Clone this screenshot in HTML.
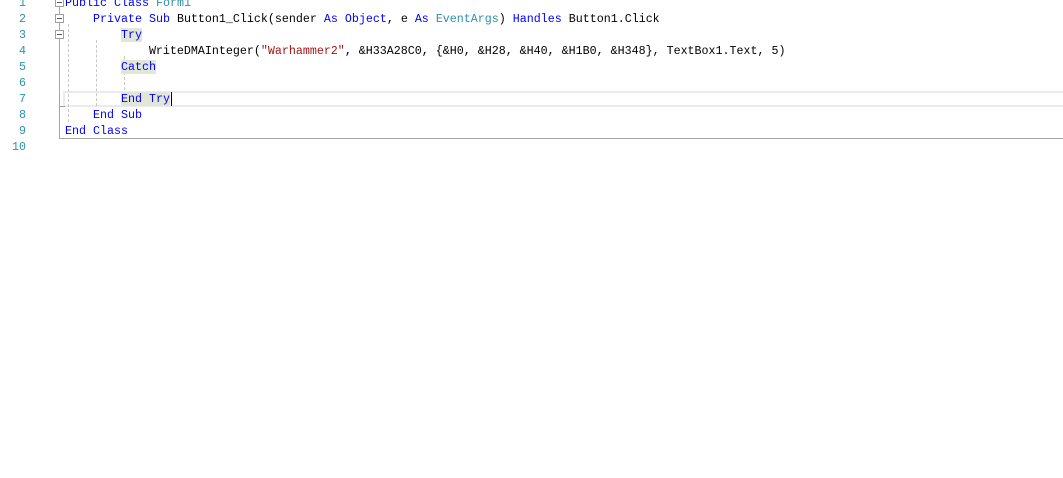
<!DOCTYPE html><html><head><style>
body{margin:0;width:1063px;height:478px;background:#fff;overflow:hidden;position:relative;font-family:"Liberation Mono",monospace;font-size:11.67px}
.l{position:absolute;left:65px;white-space:pre;height:16px;line-height:16px;color:#000;margin-top:1px}
.n{position:absolute;left:0;width:26px;text-align:right;color:#2b91af;height:16px;line-height:16px;margin-top:1px}
.k{color:#0000ff}.t{color:#2b91af}.s{color:#a31515}.h{background:#e2e6d6}
.box{position:absolute;width:7px;height:7px;border:1px solid #a0a0a0;background:#fff}
.box:after{content:"";position:absolute;left:1px;top:3px;width:5px;height:1px;background:#555}
.g{position:absolute;border-left:1px dashed #c8c8c8}
</style></head><body>
<div class="n" style="top:-6px">1</div><div class="n" style="top:10px">2</div><div class="n" style="top:26px">3</div><div class="n" style="top:42px">4</div><div class="n" style="top:58px">5</div><div class="n" style="top:74px">6</div><div class="n" style="top:90px">7</div><div class="n" style="top:106px">8</div><div class="n" style="top:122px">9</div><div class="n" style="top:138px">10</div>
<div style="position:absolute;left:63px;top:91px;width:1000px;height:12px;border:2px solid #eaeaf2;border-right:none"></div>
<div style="position:absolute;left:59px;top:4px;width:1px;height:134px;background:#a5a5a5"></div>
<div style="position:absolute;left:59px;top:138px;width:1004px;height:1px;background:#a5a5a5"></div>
<div style="position:absolute;left:59px;top:106px;width:6px;height:1px;background:#a5a5a5"></div>
<div class="box" style="left:55px;top:-2px"></div>
<div class="box" style="left:55px;top:14px"></div>
<div class="box" style="left:55px;top:30px"></div>
<div class="g" style="left:68px;top:24px;height:98px"></div>
<div class="g" style="left:96px;top:40px;height:66px"></div>
<div class="g" style="left:124px;top:56px;height:10px"></div>
<div class="g" style="left:124px;top:72px;height:18px"></div>
<div class="l" style="top:-6px"><span class="k">Public</span> <span class="k">Class</span> <span class="t">Form1</span></div>
<div class="l" style="top:10px">    <span class="k">Private</span> <span class="k">Sub</span> Button1_Click(sender <span class="k">As</span> <span class="k">Object</span>, e <span class="k">As</span> <span class="t">EventArgs</span>) <span class="k">Handles</span> Button1.Click</div>
<div class="l" style="top:26px">        <span class="k h">Try</span></div>
<div class="l" style="top:42px">            WriteDMAInteger(<span class="s">"Warhammer2"</span>, &amp;H33A28C0, {&amp;H0, &amp;H28, &amp;H40, &amp;H1B0, &amp;H348}, TextBox1.Text, 5)</div>
<div class="l" style="top:58px">        <span class="k h">Catch</span></div>
<div class="l" style="top:90px">        <span class="k h">End Try</span><span style="border-left:1px solid #000;margin-left:1px"></span></div>
<div class="l" style="top:106px">    <span class="k">End</span> <span class="k">Sub</span></div>
<div class="l" style="top:122px"><span class="k">End</span> <span class="k">Class</span></div>
</body></html>
